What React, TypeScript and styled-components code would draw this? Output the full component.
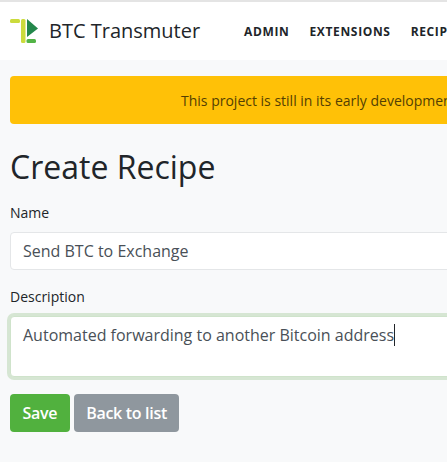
import styled, { createGlobalStyle } from 'styled-components';

const GlobalStyle = createGlobalStyle`
  html, body {
    margin: 0;
    padding: 0;
    width: 447px;
    height: 462px;
    overflow: hidden;
    background: #f8f9fa;
    font-family: 'Open Sans', sans-serif;
    color: #212529;
  }
`;

const Header = styled.header`
  width: 900px;
  height: 60px;
  box-sizing: border-box;
  background: #fff;
  border-top: 2px solid #e4e4e4;
  display: flex;
  align-items: center;
  padding: 0 0 0 10px;
`;

const Brand = styled.a`
  display: flex;
  align-items: center;
  gap: 10px;
  font-size: 20px;
  line-height: 28px;
  color: #212529;
  width: 234px;
  flex: none;
`;

const Nav = styled.nav`
  display: flex;
  gap: 20px;
`;

const NavLink = styled.a`
  font-size: 12px;
  font-weight: 700;
  letter-spacing: 0.65px;
  color: #212529;
`;

const Main = styled.main`
  width: 900px;
  box-sizing: border-box;
  padding: 16px 10px 0;
`;

const Alert = styled.div`
  height: 48px;
  box-sizing: border-box;
  background: #ffc107;
  border-radius: 4px;
  padding-left: 171px;
  display: flex;
  align-items: center;
  font-size: 14px;
  color: #533f03;
  margin-bottom: 24px;
`;

const Title = styled.h1`
  margin: 0 0 17px;
  font-size: 32px;
  line-height: 38px;
  font-weight: 400;
`;

const Field = styled.div`
  margin-bottom: 17px;
`;

const Label = styled.label`
  display: block;
  font-size: 14px;
  line-height: 20px;
  margin-bottom: 9px;
`;

const TextInput = styled.div`
  height: 38px;
  box-sizing: border-box;
  background: #fff;
  border: 1px solid #e4e6e8;
  border-radius: 4px;
  padding: 0 12px;
  font-size: 16px;
  line-height: 36px;
  color: #495057;
`;

const TextArea = styled.div`
  height: 61px;
  box-sizing: border-box;
  background: #fff;
  border: 1px solid #cfe3cb;
  box-shadow: 0 0 0 3px #d6e6d3;
  border-radius: 4px;
  padding: 6px 12px;
  font-size: 16px;
  line-height: 24px;
  color: #495057;
`;

const Caret = styled.span`
  display: inline-block;
  width: 1px;
  height: 22px;
  background: #212529;
  vertical-align: -5px;
`;

const Actions = styled.div`
  display: flex;
  gap: 4px;
`;

const Button = styled.button<{ $tone: string }>`
  height: 38px;
  box-sizing: border-box;
  border: 0;
  border-radius: 4px;
  padding: 0 12.5px;
  font-family: inherit;
  font-size: 16px;
  font-weight: 600;
  letter-spacing: -0.3px;
  color: #fff;
  background: ${(p) => p.$tone};
`;

function Logo() {
  return (
    <svg width="29" height="24" viewBox="0 0 29 24">
      <rect x="0" y="0" width="10" height="4" rx="1.5" fill="#cbdb3c" />
      <rect x="11" y="0" width="4.5" height="24" rx="1.5" fill="#cbdb3c" />
      <path d="M17 0 L28 9.5 L17 18 Z" fill="#23874b" />
      <rect x="16.5" y="20" width="9.5" height="4" rx="1.5" fill="#52b447" />
    </svg>
  );
}

export default function App() {
  return (
    <>
      <GlobalStyle />
      <Header>
        <Brand>
          <Logo />
          BTC Transmuter
        </Brand>
        <Nav>
          <NavLink>ADMIN</NavLink>
          <NavLink>EXTENSIONS</NavLink>
          <NavLink>RECIPES</NavLink>
        </Nav>
      </Header>
      <Main>
        <Alert>This project is still in its early development</Alert>
        <Title>Create Recipe</Title>
        <Field>
          <Label>Name</Label>
          <TextInput>Send BTC to Exchange</TextInput>
        </Field>
        <Field>
          <Label>Description</Label>
          <TextArea>
            Automated forwarding to another Bitcoin address
            <Caret />
          </TextArea>
        </Field>
        <Actions>
          <Button $tone="#51b13e">Save</Button>
          <Button $tone="#8f979e">Back to list</Button>
        </Actions>
      </Main>
    </>
  );
}
